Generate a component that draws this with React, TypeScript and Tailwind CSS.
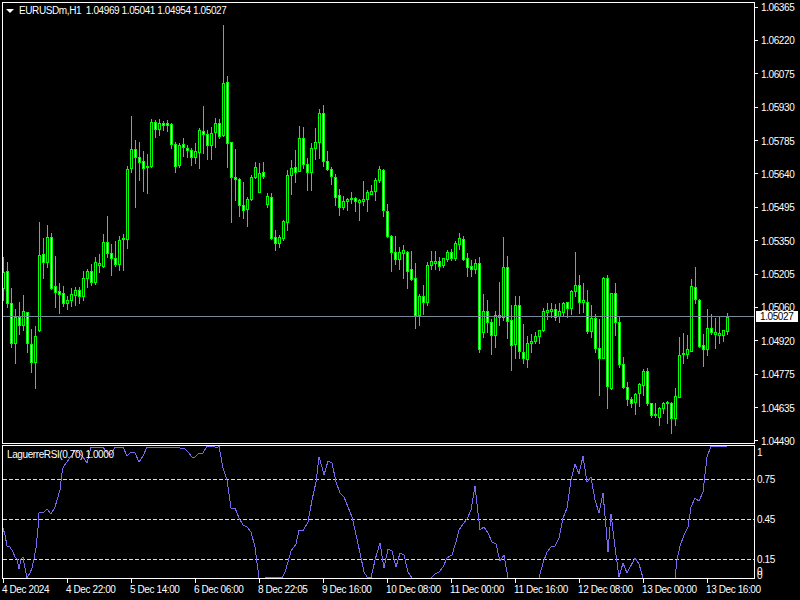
const GREEN = "#00ff00";

// [centre x, high, low, body top, body bottom, bear (white body)]
type Bar = [number, number, number, number, number, number];

// one row per candle, x moves by 4 px
const rows: [number, number, number, number, number][] = [
  [257, 300, 272, 288, 0], [262, 307, 271, 303, 1], [288, 347, 303, 343, 1], [309, 363, 317, 343, 0],
  [302, 334, 317, 325, 1], [295, 330, 311, 325, 0], [312, 352, 312, 343, 1], [329, 372, 344, 362, 1],
  [326, 388, 336, 362, 0], [222, 331, 255, 330, 0], [238, 278, 254, 262, 1], [225, 267, 237, 262, 0],
  [233, 289, 237, 288, 1], [256, 307, 286, 292, 1], [283, 313, 291, 294, 1], [286, 306, 293, 303, 1],
  [296, 309, 300, 303, 0], [288, 306, 294, 300, 0], [287, 305, 290, 295, 0], [287, 303, 290, 296, 1],
  [271, 300, 278, 296, 0], [269, 287, 271, 278, 0], [264, 285, 271, 282, 1], [257, 284, 262, 282, 0],
  [254, 272, 263, 265, 0], [234, 267, 242, 266, 0], [216, 257, 242, 253, 1], [244, 275, 253, 258, 1],
  [241, 266, 258, 264, 1], [236, 270, 240, 264, 0], [234, 270, 238, 239, 0], [166, 248, 169, 239, 0],
  [116, 172, 149, 168, 0], [140, 207, 149, 157, 1], [142, 180, 157, 162, 1], [151, 191, 161, 168, 1],
  [154, 193, 166, 167, 0], [119, 167, 122, 166, 0], [120, 137, 122, 129, 1], [119, 135, 123, 129, 0],
  [121, 130, 123, 125, 1], [120, 131, 123, 125, 1], [123, 148, 124, 144, 1], [142, 172, 144, 166, 1],
  [143, 167, 145, 165, 0], [138, 156, 144, 147, 1], [145, 157, 148, 150, 1], [148, 165, 150, 157, 1],
  [143, 163, 151, 157, 0], [128, 168, 130, 152, 0], [106, 153, 131, 134, 1], [130, 159, 134, 145, 1],
  [127, 159, 133, 145, 0], [118, 147, 123, 132, 0], [119, 138, 123, 136, 1], [25, 136, 83, 135, 0],
  [76, 167, 82, 143, 1], [142, 222, 142, 177, 1], [149, 200, 177, 179, 1], [178, 216, 179, 205, 1],
  [182, 218, 205, 210, 1], [197, 226, 199, 209, 0], [175, 200, 177, 199, 0], [162, 178, 167, 177, 0],
  [163, 192, 173, 192, 0], [162, 178, 172, 176, 1], [193, 207, 196, 204, 0], [193, 239, 197, 238, 1],
  [230, 250, 237, 243, 1], [235, 247, 237, 243, 0], [220, 240, 221, 238, 0], [170, 230, 175, 222, 0],
  [160, 194, 168, 175, 0], [150, 182, 167, 172, 1], [126, 171, 138, 171, 0], [127, 168, 138, 164, 1],
  [158, 190, 164, 172, 1], [143, 190, 148, 172, 0], [128, 159, 142, 148, 0], [109, 158, 113, 142, 0],
  [105, 166, 113, 161, 1], [151, 170, 161, 169, 1], [167, 184, 169, 176, 1], [174, 205, 177, 197, 1],
  [189, 215, 195, 207, 1], [196, 209, 201, 207, 0], [198, 210, 199, 201, 0], [192, 203, 198, 199, 0],
  [197, 211, 198, 201, 1], [199, 220, 200, 202, 0], [181, 205, 199, 201, 0], [190, 211, 192, 199, 0],
  [185, 194, 191, 194, 0], [178, 200, 180, 191, 0], [166, 182, 169, 180, 0], [169, 216, 170, 210, 1],
  [204, 237, 211, 236, 1], [235, 271, 236, 252, 1], [236, 264, 252, 259, 1], [247, 269, 252, 259, 0],
  [245, 278, 250, 253, 0], [251, 288, 252, 271, 1], [251, 280, 269, 279, 1], [263, 328, 278, 315, 1],
  [294, 325, 296, 315, 0], [285, 314, 296, 302, 1], [262, 305, 265, 302, 0], [251, 269, 261, 265, 0],
  [251, 269, 261, 263, 0], [257, 270, 261, 266, 1], [258, 267, 258, 265, 0], [250, 261, 252, 259, 0],
  [249, 260, 252, 258, 1], [241, 260, 243, 258, 0], [233, 249, 238, 244, 0], [236, 260, 239, 259, 1],
  [253, 276, 258, 267, 1], [260, 276, 266, 269, 1], [259, 273, 263, 269, 0], [257, 352, 263, 349, 1],
  [294, 337, 311, 332, 0], [300, 332, 311, 322, 1], [319, 354, 322, 335, 1], [311, 347, 315, 335, 0],
  [282, 325, 315, 317, 0], [237, 320, 267, 317, 0], [256, 338, 267, 321, 1], [305, 370, 320, 345, 1],
  [296, 358, 305, 344, 0], [296, 358, 305, 351, 1], [324, 363, 352, 358, 1], [336, 367, 343, 359, 0],
  [334, 352, 341, 343, 0], [332, 343, 336, 341, 0], [330, 343, 330, 336, 0], [308, 331, 311, 330, 0],
  [303, 319, 310, 312, 0], [303, 317, 309, 311, 0], [304, 320, 309, 317, 1], [303, 322, 311, 316, 0],
  [302, 316, 303, 312, 0], [302, 317, 302, 308, 1], [290, 314, 291, 308, 0], [252, 296, 285, 291, 0],
  [275, 313, 285, 302, 1], [283, 312, 300, 302, 0], [290, 333, 302, 331, 1], [305, 337, 318, 331, 0],
  [314, 352, 318, 348, 1], [319, 395, 348, 358, 1], [277, 358, 278, 358, 0], [275, 408, 278, 386, 1],
  [293, 389, 293, 388, 0], [283, 335, 293, 322, 1], [317, 367, 322, 364, 1], [357, 388, 364, 387, 1],
  [382, 405, 387, 399, 1], [397, 407, 399, 403, 1], [393, 414, 394, 402, 0], [383, 406, 384, 393, 0],
  [369, 395, 371, 385, 0], [368, 405, 371, 403, 1], [403, 417, 403, 415, 1], [403, 417, 414, 415, 0],
  [407, 425, 408, 417, 0], [402, 413, 403, 408, 0], [401, 423, 402, 403, 0], [402, 433, 403, 418, 1],
  [388, 425, 396, 418, 0], [337, 397, 355, 397, 0], [333, 363, 353, 354, 0], [335, 358, 349, 354, 0],
  [279, 351, 286, 351, 0], [267, 303, 287, 299, 1], [299, 347, 300, 346, 1], [334, 366, 345, 349, 1],
  [309, 355, 328, 349, 0], [314, 334, 328, 332, 1], [318, 348, 332, 334, 0], [317, 343, 333, 335, 0],
  [330, 341, 330, 335, 0], [313, 334, 317, 331, 0],
];

const bars: Bar[] = rows.map((r, i) => [3 + i * 4, r[0], r[1], r[2], r[3], r[4]]);

// indicator line, read from the picture in page pixels
const rsi = [
  "3,528 5,535 7,546 10,547 13,552 15,557 17,559 19,569 21,559 23,557 25,568 27,578 30,573 32,568 34,559 36,548 38,528 39,513 41,512 43,513 47,509 51,514 55,507 57,500 60,490 62,473 63,468 66,463 70,458 75,450 79,453 83,457 87,463 91,447 103,447 107,453 111,455 115,447 123,447 127,456 131,452 135,453 139,462 143,456 147,447 173,447 180,448 185,449 188,452 192,457 195,457 199,453 203,453 207,446 213,446 217,448 219,446 223,468 227,480 231,508 235,508 239,518 243,525 247,527 251,532 255,547 259,578",
  "265,578 272,577 282,578 285,572 288,562 291,551 296,544 299,530 303,531 308,522 312,500 316,482 319,457 322,467 324,475 328,461 332,463 336,482 340,493 344,497 348,507 352,517 355,530 360,553 364,572 367,577 371,578 375,560 380,543 384,568 388,549 392,551 396,567 400,553 404,555 408,572 412,578 431,578 435,574 439,572 443,567 447,558 452,555 456,542 459,530 463,524 467,519 471,510 475,486 480,530 484,527 488,533 492,542 496,544 500,561 504,555 508,578",
  "530,578 539,578 543,563 547,552 551,547 555,546 559,538 563,518 567,508 571,480 575,464 579,474 583,456 587,482 591,477 595,500 599,513 603,493 606,527 608,552 611,514 615,547 619,577 623,563 627,573 635,558 639,564 643,578 675,578 677,560 680,546 684,535 688,527 691,507 695,498 699,501 703,492 707,457 711,446 727,446",
].join(" ");

const prices = ["1.06365", "1.06220", "1.06075", "1.05930", "1.05785", "1.05640", "1.05495", "1.05350", "1.05205", "1.05060", "1.04920", "1.04775", "1.04635", "1.04490"];
const times = ["4 Dec 2024", "4 Dec 22:00", "5 Dec 14:00", "6 Dec 06:00", "8 Dec 22:05", "9 Dec 16:00", "10 Dec 08:00", "11 Dec 00:00", "11 Dec 16:00", "12 Dec 08:00", "13 Dec 00:00", "13 Dec 16:00"];

function PriceLabel({ text }: { text: string }) {
  return (
    <div className="flex items-center h-[10px]">
      <div className="w-[3px] h-px bg-white" />
      <span className="ml-[3px] pt-[2px]">{text}</span>
    </div>
  );
}

export default function App() {
  return (
    <div
      className="relative w-[800px] h-[600px] bg-black text-white overflow-hidden text-[10px] leading-[10px] tracking-[-0.4px]"
      style={{ fontFamily: '"Liberation Sans", Arial, sans-serif' }}
    >
      {/* Price chart */}
      <div className="flex items-start h-[444px] pt-[2px] pl-[2px]">
        <div className="relative w-[753px] h-[442px] border border-white">
          <svg viewBox="3 3 751 440" className="block w-[751px] h-[440px]" shapeRendering="crispEdges">
            {bars.map(([x, high, low, top, bottom, bear]) => (
              <g key={x}>
                <rect x={x} y={high} width={1} height={low - high + 1} fill={GREEN} />
                <rect x={x - 1} y={top} width={3} height={bottom - top + 1} fill={GREEN} />
                {bottom - top > 1 && (
                  <rect x={x} y={top + 1} width={1} height={bottom - top - 1} fill={bear ? "#ffffff" : "#000000"} />
                )}
              </g>
            ))}
            <rect x={3} y={316} width={751} height={1} fill="#778899" />
          </svg>
          <div className="absolute left-[3px] top-[3px] flex items-center">
            <svg width="8" height="4" viewBox="0 0 8 4" className="mr-[5px]">
              <path d="M0 0h8L4 4z" fill="#ffffff" />
            </svg>
            <span className="whitespace-pre">EURUSDm,H1  1.04969 1.05041 1.04954 1.05027</span>
          </div>
        </div>
        <div className="flex flex-col justify-between h-[444px]">
          {prices.map((p) => (
            <PriceLabel key={p} text={p} />
          ))}
        </div>
        <div className="absolute left-[756px] top-[311px] w-[42px] h-[11px] bg-white text-black leading-[11px] pl-[4px]">1.05027</div>
      </div>

      {/* Indicator window */}
      <div className="flex items-start h-[135px] pt-px pl-[2px]">
        <div className="relative w-[753px] h-[134px] border border-white">
          <svg viewBox="3 446 751 132" className="block w-[751px] h-[132px]">
            {[479, 519, 559, 578].map((y) => (
              <line key={y} x1={3} x2={754} y1={y + 0.5} y2={y + 0.5} stroke="#dcdcdc" strokeDasharray="4 2" shapeRendering="crispEdges" />
            ))}
            <polyline points={rsi} fill="none" stroke="#7b68ee" strokeWidth={1} shapeRendering="crispEdges" />
          </svg>
          <div className="absolute left-[4px] top-[4px]">LaguerreRSI(0.70) 1.0000</div>
        </div>
        <div className="flex flex-col pl-[2px] pt-[3px]">
          <span>1</span>
          <span className="mt-[17px]">0.75</span>
          <span className="mt-[30px]">0.45</span>
          <span className="mt-[30px]">0.15</span>
          <span className="mt-[2px]">0</span>
          <span className="-mt-[6px]">0</span>
        </div>
      </div>

      {/* Time axis */}
      <div className="grid grid-cols-[repeat(12,64px)] pl-[2px]">
        {times.map((t) => (
          <div key={t} className="whitespace-nowrap">
            <div className="ml-px w-px h-[4px] bg-white" />
            <span className="block mt-[2px]">{t}</span>
          </div>
        ))}
      </div>
    </div>
  );
}
